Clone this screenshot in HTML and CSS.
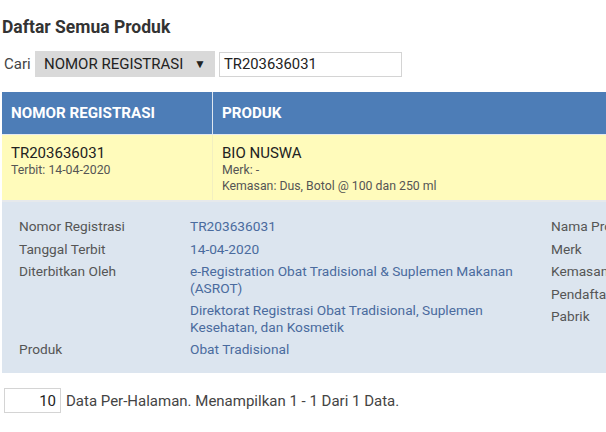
FILE: index.html
```html
<!DOCTYPE html>
<html>
<head>
<meta charset="utf-8">
<link rel="stylesheet" href="styles.css">
</head>
<body>
<div class="page">
  <h1 class="title">Daftar Semua Produk</h1>
  <div class="search">
    <span class="search-label">Cari</span>
    <div class="select"><span>NOMOR REGISTRASI</span><span class="arrow">▼</span></div>
    <div class="input">TR203636031</div>
  </div>
  <div class="table">
    <div class="thead">
      <div class="th c1">NOMOR REGISTRASI</div>
      <div class="th c2">PRODUK</div>
    </div>
    <div class="trow">
      <div class="td c1">
        <div class="main">TR203636031</div>
        <div class="sub">Terbit: 14-04-2020</div>
      </div>
      <div class="td c2">
        <div class="main">BIO NUSWA</div>
        <div class="sub">Merk: -</div>
        <div class="sub">Kemasan: Dus, Botol @ 100 dan 250 ml</div>
      </div>
    </div>
    <div class="detail">
      <div class="dcol left">
        <div class="dl">Nomor Registrasi</div><div class="dv">TR203636031</div>
        <div class="dl">Tanggal Terbit</div><div class="dv">14-04-2020</div>
        <div class="dl">Diterbitkan Oleh</div>
        <div class="dv multi">
          <div class="blk">e-Registration Obat Tradisional &amp; Suplemen Makanan (ASROT)</div>
          <div class="blk">Direktorat Registrasi Obat Tradisional, Suplemen Kesehatan, dan Kosmetik</div>
        </div>
        <div class="dl">Produk</div><div class="dv">Obat Tradisional</div>
      </div>
      <div class="dcol right">
        <div class="dl">Nama Produk</div>
        <div class="dl">Merk</div>
        <div class="dl">Kemasan</div>
        <div class="dl">Pendaftar</div>
        <div class="dl">Pabrik</div>
      </div>
    </div>
  </div>
  <div class="footer">
    <div class="perpage">10</div>
    <span class="info">Data Per-Halaman. Menampilkan 1 - 1 Dari 1 Data.</span>
  </div>
</div>
</body>
</html>
```
FILE: styles.css
```css
html, body {
  margin: 0;
  padding: 0;
  background: #fff;
  overflow: hidden;
}
body {
  font-family: Roboto, "Liberation Sans", sans-serif;
  font-size: 14px;
  color: #333;
  width: 606px;
  height: 432px;
}
.page {
  padding-left: 2px;
}
.title {
  margin: 0;
  padding-top: 17px;
  font-size: 17.5px;
  line-height: 20px;
  font-weight: bold;
  color: #333;
}
.search {
  display: flex;
  align-items: center;
  margin-top: 14px;
  height: 26px;
  font-size: 15px;
}
.search-label {
  margin-left: 2px;
  width: 31px;
  color: #444;
}
.select {
  width: 180px;
  height: 26px;
  box-sizing: border-box;
  background: #d9d9d9;
  display: flex;
  align-items: center;
  justify-content: space-between;
  padding: 0 9px 0 9px;
  color: #222;
}
.arrow {
  font-size: 12px;
}
.input {
  margin-left: 4px;
  width: 183px;
  height: 25px;
  box-sizing: border-box;
  border: 1px solid #d4d4d4;
  display: flex;
  align-items: center;
  padding-left: 4px;
  color: #222;
  font-size: 14.8px;
}
.table {
  margin-top: 15px;
  width: 800px;
}
.thead {
  display: flex;
  height: 42px;
  background: #4d7db7;
}
.th {
  color: #fff;
  font-weight: bold;
  font-size: 15.2px;
  display: flex;
  align-items: center;
  padding-left: 9px;
  box-sizing: border-box;
}
.c1 {
  width: 211px;
  border-right: 1px solid #dfe7f0;
  box-sizing: border-box;
}
.c2 {
  flex: 1;
}
.trow {
  display: flex;
  background: #fffbbb;
  border-top: 1px solid #e4eaf0;
  border-bottom: 2px solid #e6e9ec;
  height: 68px;
  box-sizing: border-box;
}
.trow .c1 {
  border-right-color: #f2efc0;
}
.td {
  padding: 9px 9px 0 9px;
  box-sizing: border-box;
}
.main {
  font-size: 15px;
  line-height: 18px;
  color: #222;
}
.sub {
  font-size: 12.3px;
  line-height: 16px;
  color: #555;
}
.detail {
  display: flex;
  background: #dce5ef;
  height: 171px;
  box-sizing: border-box;
  padding: 13px 0 0 17px;
  font-size: 13.7px;
}
.dcol.left {
  display: grid;
  grid-template-columns: 171px 361px;
  align-content: start;
}
.dcol.right {
  display: flex;
  flex-direction: column;
}
.dl, .dv {
  line-height: 16.5px;
  padding: 3px 0;
}
.dl {
  color: #555;
}
.dv {
  color: #4a6b9e;
}
.dv.multi {
  padding: 0;
}
.blk {
  padding: 3px 0;
}
.footer {
  display: flex;
  align-items: center;
  margin-top: 15px;
  margin-left: 2px;
  font-size: 15px;
}
.perpage {
  width: 57px;
  height: 25px;
  box-sizing: border-box;
  border: 1px solid #d4d4d4;
  display: flex;
  align-items: center;
  justify-content: flex-end;
  padding-right: 4px;
  color: #222;
}
.info {
  margin-left: 5px;
  color: #444;
}
```
